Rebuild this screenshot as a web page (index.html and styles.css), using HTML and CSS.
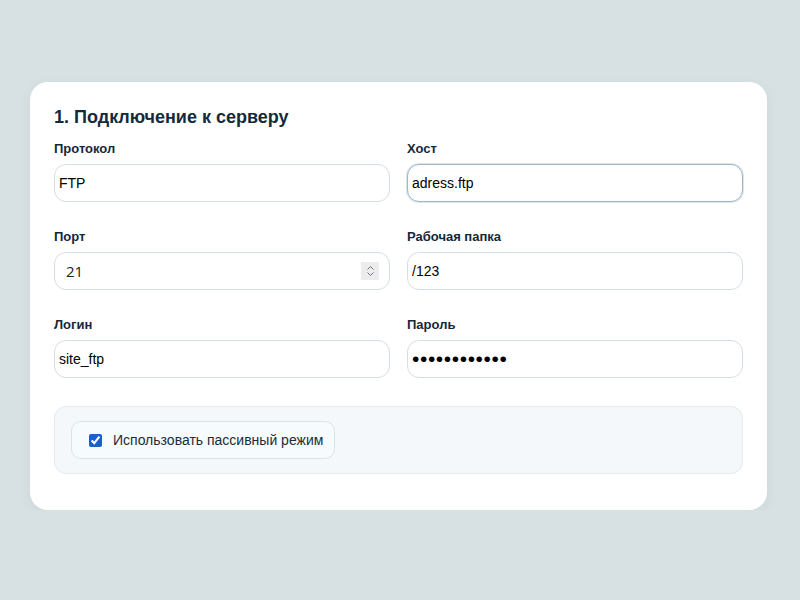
FILE: index.html
```html
<!DOCTYPE html>
<html lang="ru">
<head>
	<meta charset="UTF-8">
	<title>Подключение к серверу</title>
	<link rel="stylesheet" href="styles.css">
</head>
<body>
	<div class="card">
		<h2 class="title">1. Подключение к серверу</h2>
		<div class="grid">
			<div class="field">
				<label for="proto">Протокол</label>
				<input type="text" id="proto" class="inp" value="FTP">
			</div>
			<div class="field">
				<label for="host">Хост</label>
				<input type="text" id="host" class="inp focus" value="adress.ftp">
			</div>
			<div class="field">
				<label for="port">Порт</label>
				<div class="num-wrap">
					<input type="text" id="port" class="inp num" value="21">
					<span class="spin">
						<svg width="9" height="12" viewBox="0 0 9 12"><path d="M1.5 4.5 4.5 1.5 7.5 4.5M1.5 7.5 4.5 10.5 7.5 7.5" fill="none" stroke="#6b7280" stroke-width="1"/></svg>
					</span>
				</div>
			</div>
			<div class="field">
				<label for="dir">Рабочая папка</label>
				<input type="text" id="dir" class="inp" value="/123">
			</div>
			<div class="field">
				<label for="login">Логин</label>
				<input type="text" id="login" class="inp" value="site_ftp">
			</div>
			<div class="field">
				<label for="pass">Пароль</label>
				<input type="password" id="pass" class="inp" value="123456789012">
			</div>
		</div>
		<div class="opts">
			<label class="check">
				<input type="checkbox" checked>
				<span>Использовать пассивный режим</span>
			</label>
		</div>
	</div>
</body>
</html>
```

FILE: styles.css
```css
*{
	margin: 0;
	padding: 0;
	box-sizing: border-box;
}

body{
	background-color: #d7e1e3;
	font-family: "Liberation Sans", Arial, sans-serif;
	color: #13283a;
	padding: 82px 33px 0 30px;
}

.card{
	background: #fff;
	border-radius: 18px;
	padding: 24px 24px 36px;
	box-shadow: 0 4px 14px rgba(60, 90, 100, 0.06);
}

.title{
	font-size: 18px;
	font-weight: bold;
	line-height: 22px;
	color: #142a3b;
	margin-bottom: 13px;
}

.grid{
	display: grid;
	grid-template-columns: 1fr 1fr;
	column-gap: 17px;
	row-gap: 27px;
}

.field label{
	display: block;
	font-size: 13px;
	font-weight: bold;
	line-height: 16px;
	margin-bottom: 7px;
	color: #14283a;
}

.inp{
	display: block;
	width: 100%;
	height: 38px;
	border: 1px solid #d5dee3;
	border-radius: 12px;
	padding: 0 4px;
	font-family: "Liberation Sans", Arial, sans-serif;
	font-size: 14px;
	color: #000;
	background: #fff;
	outline: none;
}

.inp.focus{
	border-color: #9db7c9;
	box-shadow: 0 0 0 1px rgba(157, 183, 201, 0.35);
}

.num-wrap{
	position: relative;
}

.inp.num{
	padding-left: 11px;
	font-family: "Open Sans", sans-serif;
	font-size: 15px;
	color: #15222e;
}

.spin{
	position: absolute;
	right: 11px;
	top: 10px;
	width: 18px;
	height: 18px;
	background: #ececec;
	display: flex;
	align-items: center;
	justify-content: center;
}

#pass{
	font-size: 21px;
	letter-spacing: 0.6px;
}

.opts{
	margin-top: 28px;
	background: #f5f8fa;
	border: 1px solid #e4eaee;
	border-radius: 12px;
	padding: 14px 16px;
}

.check{
	display: inline-flex;
	align-items: center;
	gap: 11px;
	height: 38px;
	padding: 0 11px 0 17px;
	background: #f6fbfd;
	border: 1px solid #d6e5ea;
	border-radius: 10px;
	font-size: 14px;
	color: #1c2b38;
}

.check input{
	width: 13px;
	height: 13px;
	accent-color: #1a5fd0;
	margin: 0;
}
```
